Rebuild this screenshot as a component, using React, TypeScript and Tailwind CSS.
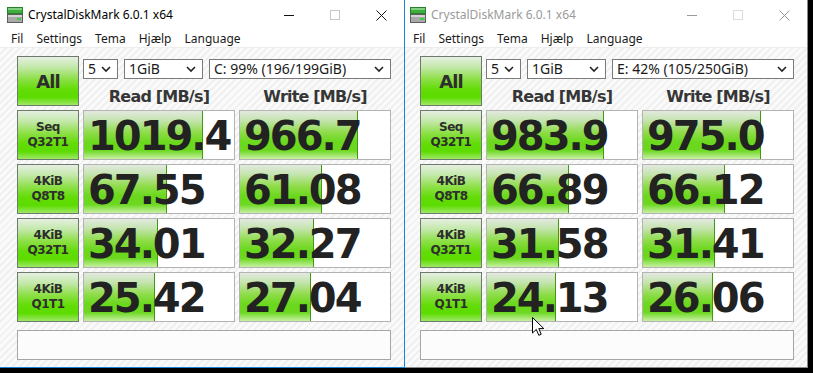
import React from "react";

type Row = {
  top: string;
  bottom: string;
  read: string;
  readBar: number;
  write: string;
  writeBar: number;
};

interface WindowProps {
  active: boolean;
  drive: string;
  rows: Row[];
  iconLeft: string;
  menuLeft: string;
  contentLeft: string;
  cursor?: boolean;
}

const leftRows: Row[] = [
  { top: "Seq", bottom: "Q32T1", read: "1019.4", readBar: 119, write: "966.7", writeBar: 118 },
  { top: "4KiB", bottom: "Q8T8", read: "67.55", readBar: 83, write: "61.08", writeBar: 82 },
  { top: "4KiB", bottom: "Q32T1", read: "34.01", readBar: 74, write: "32.27", writeBar: 74 },
  { top: "4KiB", bottom: "Q1T1", read: "25.42", readBar: 71, write: "27.04", writeBar: 71 },
];

const rightRows: Row[] = [
  { top: "Seq", bottom: "Q32T1", read: "983.9", readBar: 117, write: "975.0", writeBar: 118 },
  { top: "4KiB", bottom: "Q8T8", read: "66.89", readBar: 82, write: "66.12", writeBar: 82 },
  { top: "4KiB", bottom: "Q32T1", read: "31.58", readBar: 72, write: "31.41", writeBar: 72 },
  { top: "4KiB", bottom: "Q1T1", read: "24.13", readBar: 69, write: "26.06", writeBar: 70 },
];

const greenButton =
  "border border-[#6f7a6f] bg-[linear-gradient(to_bottom,#e6efe2_0%,#c2e8a8_22%,#8fe04a_45%,#62dc06_68%,#5cdc00_84%,#9ee866_100%)] text-[#2e2e2e] font-bold font-['DejaVu_Sans',sans-serif]";

function AppIcon() {
  return (
    <svg width="16" height="16" viewBox="0 0 16 16">
      <rect x="0.5" y="0.5" width="15" height="6" fill="#3fae3f" stroke="#2a7f2a" />
      <rect x="1" y="1" width="14" height="2" fill="#7fd07f" />
      <rect x="0.5" y="7.5" width="15" height="8" fill="#a9a9a9" stroke="#5e5e5e" />
      <rect x="1" y="8" width="14" height="2" fill="#d4d4d4" />
      <rect x="10" y="11" width="4" height="2" fill="#3fcf3f" />
    </svg>
  );
}

function Chevron() {
  return (
    <svg width="10" height="7" viewBox="0 0 10 7">
      <polyline points="1,1 5,5 9,1" fill="none" stroke="#222" strokeWidth="1.6" />
    </svg>
  );
}

function Select({ value, width }: { value: string; width: string }) {
  return (
    <div
      className={`${width} h-[20px] border border-[#7a7a7a] bg-white flex items-center justify-between pl-[4px] pr-[6px] text-[14px] leading-none text-[#1a1a1a] font-['Noto_Sans',sans-serif]`}
    >
      <span className="whitespace-nowrap">{value}</span>
      <Chevron />
    </div>
  );
}

function ResultCell({ value, bar }: { value: string; bar: number }) {
  return (
    <div className="relative h-[50px] border border-[#b3b3b3] bg-white overflow-hidden">
      <div
        className="absolute left-0 top-0 bottom-0 border-r border-[#3f9a12] bg-[linear-gradient(to_bottom,#e2e9df_0%,#c4e4ae_20%,#8edc48_45%,#6ad81c_65%,#6cd820_82%,#c8f0a4_100%)]"
        style={{ width: bar }}
      />
      <div className="relative h-full flex items-center pl-[4px] pt-[1px] text-[40px] leading-none font-bold tracking-[-2px] text-[#222] font-['DejaVu_Sans',sans-serif] whitespace-nowrap">
        {value}
      </div>
    </div>
  );
}

function WindowControls({ active }: { active: boolean }) {
  const stroke = active ? "#111" : "#9a9a9a";
  const maxStroke = active ? "#c6c6c6" : "#dcdcdc";
  return (
    <div className="flex h-[30px]">
      <div className="w-[46px] h-full flex items-center justify-center">
        <svg width="10" height="10" viewBox="0 0 10 10">
          <line x1="0" y1="5.5" x2="10" y2="5.5" stroke={stroke} strokeWidth="1" />
        </svg>
      </div>
      <div className="w-[46px] h-full flex items-center justify-center">
        <svg width="10" height="10" viewBox="0 0 10 10">
          <rect x="0.5" y="0.5" width="9" height="9" fill="none" stroke={maxStroke} strokeWidth="1" />
        </svg>
      </div>
      <div className="w-[46px] h-full flex items-center justify-center">
        <svg width="11" height="11" viewBox="0 0 11 11">
          <line x1="0.5" y1="0.5" x2="10.5" y2="10.5" stroke={stroke} strokeWidth="1" />
          <line x1="10.5" y1="0.5" x2="0.5" y2="10.5" stroke={stroke} strokeWidth="1" />
        </svg>
      </div>
    </div>
  );
}

function Cursor() {
  return (
    <svg width="13" height="20" viewBox="0 0 13 20" className="absolute left-[127px] top-[317px]">
      <path
        d="M0.5 0.5 L0.5 16 L4.3 12.4 L6.8 18.3 L9.2 17.3 L6.8 11.6 L11.8 11.6 Z"
        fill="#fff"
        stroke="#000"
        strokeWidth="1"
        strokeLinejoin="miter"
      />
    </svg>
  );
}

function BenchWindow({ active, drive, rows, iconLeft, menuLeft, contentLeft, cursor }: WindowProps) {
  return (
    <div
      className={
        active
          ? "relative w-[405px] h-[368px] flex flex-col bg-white border-r border-b border-[#1883d7]"
          : "relative w-[403px] h-[368px] flex flex-col bg-white border-r border-b border-[#8a8a8a]"
      }
    >
      <div className="h-[30px] flex items-center">
        <div className={iconLeft}>
          <AppIcon />
        </div>
        <div
          className={`ml-[5px] flex-1 text-[12px] font-['Noto_Sans',sans-serif] ${
            active ? "text-black" : "text-[#9a9a9a]"
          }`}
        >
          CrystalDiskMark 6.0.1 x64
        </div>
        <WindowControls active={active} />
      </div>
      <div
        className={`h-[18px] flex items-center gap-[13px] ${menuLeft} text-[12px] text-[#1a1a1a] font-['Noto_Sans',sans-serif] bg-white border-b border-[#ededed]`}
      >
        <span>Fil</span>
        <span>Settings</span>
        <span>Tema</span>
        <span>Hjælp</span>
        <span>Language</span>
      </div>
      <div
        className={`flex-1 pt-[8px] ${contentLeft} bg-[repeating-linear-gradient(135deg,#fafafa_0px,#fafafa_3px,#f0f0f0_3px,#f0f0f0_5px)]`}
      >
        <div className="grid grid-cols-[62px_152px_152px] gap-x-[4px] gap-y-[4px]">
          <div className={`h-[50px] flex items-center justify-center text-[18px] tracking-[-1px] ${greenButton}`}>
            All
          </div>
          <div className="col-span-2 h-[50px] flex flex-col">
            <div className="mt-[3px] flex gap-[6px]">
              <Select value="5" width="w-[35px]" />
              <Select value="1GiB" width="w-[79px]" />
              <Select value={drive} width="w-[182px]" />
            </div>
            <div className="h-[27px] grid grid-cols-2 gap-x-[4px] pt-[8px] leading-[19px] text-[16px] tracking-[-0.8px] font-bold text-[#363636] font-['DejaVu_Sans',sans-serif]">
              <div className="text-center">Read [MB/s]</div>
              <div className="text-center">Write [MB/s]</div>
            </div>
          </div>
          {rows.map((row, i) => (
            <React.Fragment key={i}>
              <div
                className={`h-[50px] flex flex-col items-center justify-center text-[12px] tracking-[-0.5px] leading-[15px] ${greenButton}`}
              >
                <span>{row.top}</span>
                <span>{row.bottom}</span>
              </div>
              <ResultCell value={row.read} bar={row.readBar} />
              <ResultCell value={row.write} bar={row.writeBar} />
            </React.Fragment>
          ))}
        </div>
        <div className="mt-[8px] w-[374px] h-[30px] border border-[#a6a6a6] bg-[#fcfcfc]" />
      </div>
      {cursor && <Cursor />}
    </div>
  );
}

export default function App() {
  return (
    <div className="w-[813px] h-[373px] bg-black flex items-start overflow-hidden">
      <BenchWindow
        active
        drive="C: 99% (196/199GiB)"
        rows={leftRows}
        iconLeft="ml-[7px]"
        menuLeft="pl-[11px]"
        contentLeft="pl-[17px]"
      />
      <BenchWindow
        active={false}
        drive="E: 42% (105/250GiB)"
        rows={rightRows}
        iconLeft="ml-[5px]"
        menuLeft="pl-[8px]"
        contentLeft="pl-[15px]"
        cursor
      />
    </div>
  );
}
